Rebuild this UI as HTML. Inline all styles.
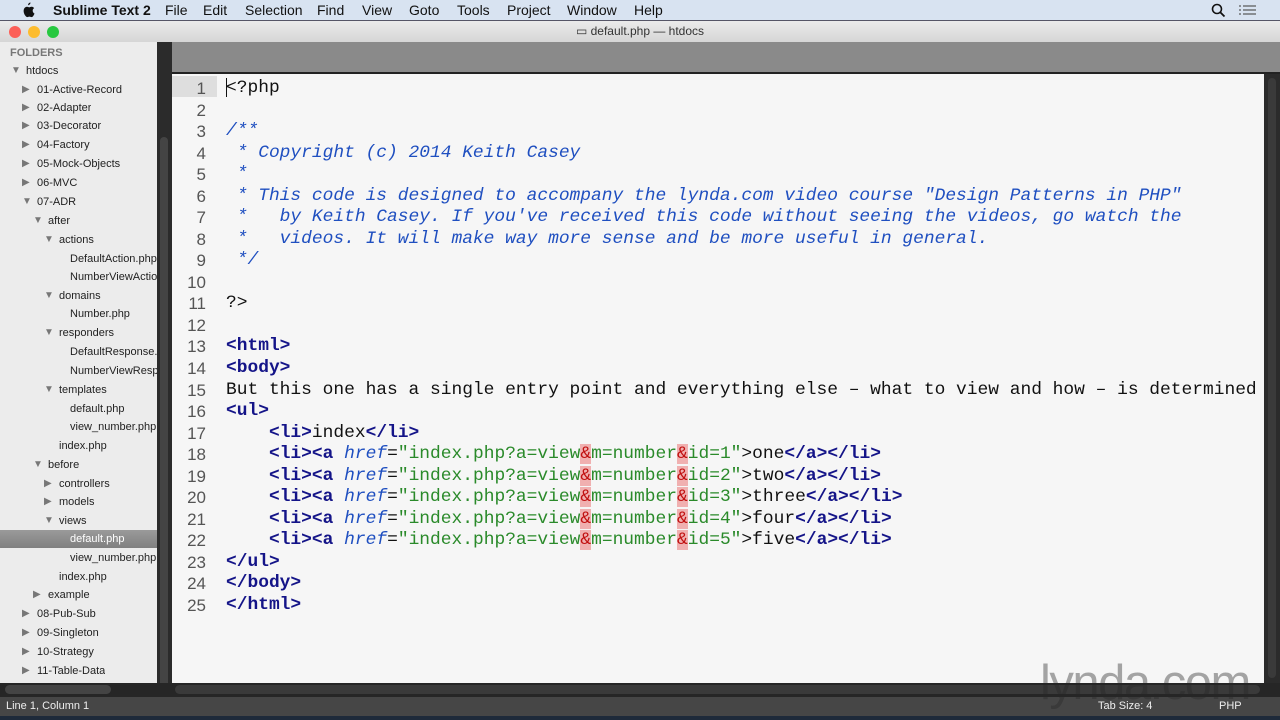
<!DOCTYPE html>
<html><head><meta charset="utf-8"><style>
*{margin:0;padding:0;box-sizing:border-box}
body{width:1280px;height:720px;overflow:hidden;background:#1e2a3a;position:relative;font-family:"Liberation Sans",sans-serif}
.abs{position:absolute}
#menu{left:0;top:0;width:1280px;height:21px;background:#d8e3f1;border-bottom:1px solid #556;font-size:14px;color:#111}
#menu span{position:absolute;top:2px}
#title{left:0;top:21px;width:1280px;height:21px;background:linear-gradient(#ebebeb,#d6d6d6);font-size:12px;color:#333;text-align:center;line-height:21px}
.dot{position:absolute;top:26px;width:12px;height:12px;border-radius:6px}
#side{left:0;top:42px;width:157px;height:641px;background:#ececec;font-size:11px;color:#222;overflow:hidden}
#side div{position:absolute;white-space:nowrap;height:18px;line-height:18px}
#sbar{left:157px;top:42px;width:15px;height:641px;background:#2b2b2b}
#tabs{left:172px;top:42px;width:1108px;height:32px;background:#8a8a8a;border-bottom:2px solid #222}
#ed{left:172px;top:74px;width:1092px;height:609px;background:#f6f6f6;overflow:hidden}
#rsb{left:1264px;top:74px;width:16px;height:609px;background:#2b2b2b}
#bsb{left:0;top:683px;width:1280px;height:14px;background:#262626}
#status{left:0;top:697px;width:1280px;height:19px;background:#464646;color:#eee;font-size:11px;line-height:19px}
.ln{position:absolute;left:0;width:34px;text-align:right;font-family:"Liberation Sans",sans-serif;font-size:17px;color:#555}
.cd{position:absolute;left:54px;font-family:"Liberation Mono",monospace;font-size:17.9px;white-space:pre;color:#111}
.t{color:#141488;font-weight:bold}.c{color:#1f4fc0;font-style:italic}.a{color:#1f4fc0;font-style:italic}.s{color:#2a8a2a}.e{color:#c01010;background:#f0b0b0}
</style></head><body>
<div id="menu" class="abs">
<svg style="position:absolute;left:21px;top:2px" width="14" height="16" viewBox="0 0 14 16"><path d="M9.5 0.5c0 1.3-1 2.6-2.4 2.7-.1-1.3 1-2.6 2.4-2.7zM11.7 8.6c0-1.6 1.3-2.4 1.4-2.5-.8-1.1-2-1.3-2.4-1.3-1-.1-2 .6-2.5.6s-1.3-.6-2.2-.6C4.900 4.800 3.800 5.500 3.200 6.500c-1.200 2.100-.3 5.200.9 6.900.6.8 1.200 1.700 2.100 1.700.8 0 1.200-.5 2.200-.5s1.300.5 2.200.5c.9 0 1.500-.8 2-1.700.6-.9.9-1.800.9-1.900 0 0-1.800-.7-1.800-2.900z" fill="#111"/></svg>
<span style="left:53px;font-weight:bold">Sublime Text 2</span>
<span style="left:165px">File</span><span style="left:203px">Edit</span><span style="left:245px">Selection</span><span style="left:317px">Find</span><span style="left:362px">View</span><span style="left:409px">Goto</span><span style="left:457px">Tools</span><span style="left:507px">Project</span><span style="left:567px">Window</span><span style="left:634px">Help</span>
<svg style="position:absolute;left:1211px;top:3px" width="15" height="15"><circle cx="6" cy="6" r="4.5" stroke="#111" stroke-width="1.6" fill="none"/><line x1="9.5" y1="9.5" x2="13.5" y2="13.5" stroke="#111" stroke-width="1.8"/></svg>
<svg style="position:absolute;left:1239px;top:4px" width="18" height="12"><g stroke="#555" stroke-width="1.2"><line x1="0" y1="2" x2="2" y2="2"/><line x1="4" y1="2" x2="17" y2="2"/><line x1="0" y1="6" x2="2" y2="6"/><line x1="4" y1="6" x2="17" y2="6"/><line x1="0" y1="10" x2="2" y2="10"/><line x1="4" y1="10" x2="17" y2="10"/></g></svg>
</div>
<div id="title" class="abs">&#9645; default.php — htdocs</div>
<div class="dot" style="left:9px;background:#fc5f57"></div><div class="dot" style="left:28px;background:#fdbc2e"></div><div class="dot" style="left:47px;background:#28c840"></div>
<div id="side" class="abs">
<div style="left:10px;top:2px;font-weight:bold;color:#777">FOLDERS</div>
<div style="left:0;top:488px;width:157px;background:linear-gradient(#9a9a9a,#808080)"></div>
</div>
<div id="tree" class="abs" style="left:0;top:1px;font-size:11px;color:#222"></div>
<div id="sbar" class="abs"><div class="abs" style="left:3px;top:95px;width:8px;height:570px;border-radius:4px;background:#444"></div></div>
<div id="tabs" class="abs"></div>
<div id="ed" class="abs"><div class="abs" style="left:0;top:2px;width:45px;height:21px;background:#dedede"></div><div class="abs" style="left:54px;top:4px;width:1px;height:19px;background:#111"></div></div>
<div id="rsb" class="abs"><div class="abs" style="left:4px;top:4px;width:8px;height:600px;border-radius:4px;background:#3a3a3a"></div></div>
<div id="bsb" class="abs"><div class="abs" style="left:5px;top:2px;width:106px;height:9px;border-radius:5px;background:#444"></div><div class="abs" style="left:175px;top:2px;width:1085px;height:9px;border-radius:5px;background:#3a3a3a"></div></div>
<div id="status" class="abs"><span style="position:absolute;left:6px">Line 1, Column 1</span><span style="position:absolute;left:1098px">Tab Size: 4</span><span style="position:absolute;left:1219px">PHP</span></div>
<div class="abs" style="left:1040px;top:660px;font-size:49px;color:rgba(40,40,40,0.4);letter-spacing:-1.5px;line-height:46px">lynda.com</div>
<script>
var T=[[70,0,1,'htdocs'],[89,1,0,'01-Active-Record'],[107,1,0,'02-Adapter'],[125,1,0,'03-Decorator'],[144,1,0,'04-Factory'],[163,1,0,'05-Mock-Objects'],[182,1,0,'06-MVC'],[201,1,1,'07-ADR'],[220,2,1,'after'],[239,3,1,'actions'],[258,4,-1,'DefaultAction.php'],[276,4,-1,'NumberViewAction.php'],[295,3,1,'domains'],[313,4,-1,'Number.php'],[332,3,1,'responders'],[351,4,-1,'DefaultResponse.php'],[370,4,-1,'NumberViewResponse.php'],[389,3,1,'templates'],[408,4,-1,'default.php'],[426,4,-1,'view_number.php'],[445,3,-1,'index.php'],[464,2,1,'before'],[483,3,0,'controllers'],[501,3,0,'models'],[520,3,1,'views'],[538,4,-1,'default.php'],[557,4,-1,'view_number.php'],[576,3,-1,'index.php'],[594,2,0,'example'],[613,1,0,'08-Pub-Sub'],[632,1,0,'09-Singleton'],[651,1,0,'10-Strategy'],[670,1,0,'11-Table-Data']];
var X=[26,37,48,59,70],h='';
T.forEach(function(r){var x=X[r[1]],y=r[0]-9;var sel=r[0]==538;
if(r[2]>=0)h+='<div style="position:absolute;left:'+(x-15)+'px;top:'+y+'px;height:18px;line-height:18px;font-size:10px;color:#777">'+(r[2]?'&#9660;':'&#9654;')+'</div>';
h+='<div style="position:absolute;left:'+x+'px;top:'+y+'px;height:18px;line-height:18px;white-space:nowrap;max-width:'+(157-x)+'px;overflow:hidden;color:'+(sel?'#fff':'#222')+'">'+r[3]+'</div>';});
document.getElementById('tree').innerHTML=h;
var L=['<span>&lt;?php</span>','','<span class="c">/**</span>','<span class="c"> * Copyright (c) 2014 Keith Casey</span>','<span class="c"> *</span>','<span class="c"> * This code is designed to accompany the lynda.com video course "Design Patterns in PHP"</span>','<span class="c"> *   by Keith Casey. If you\'ve received this code without seeing the videos, go watch the</span>','<span class="c"> *   videos. It will make way more sense and be more useful in general.</span>','<span class="c"> */</span>','','?&gt;','','<span class="t">&lt;html&gt;</span>','<span class="t">&lt;body&gt;</span>','But this one has a single entry point and everything else – what to view and how – is determined','<span class="t">&lt;ul&gt;</span>','    <span class="t">&lt;li&gt;</span>index<span class="t">&lt;/li&gt;</span>'];
var W=['one','two','three','four','five'];
W.forEach(function(w,i){L.push('    <span class="t">&lt;li&gt;&lt;a</span> <span class="a">href</span>=<span class="s">"index.php?a=view</span><span class="e">&amp;</span><span class="s">m=number</span><span class="e">&amp;</span><span class="s">id='+(i+1)+'"</span>&gt;'+w+'<span class="t">&lt;/a&gt;&lt;/li&gt;</span>');});
L.push('<span class="t">&lt;/ul&gt;</span>','<span class="t">&lt;/body&gt;</span>','<span class="t">&lt;/html&gt;</span>');
var e='';L.forEach(function(s,i){var y=15+i*21.54-11;e+='<div class="ln" style="top:'+(y+1)+'px">'+(i+1)+'</div><div class="cd" style="top:'+y+'px">'+s+'</div>';});
document.getElementById('ed').innerHTML+=e;
</script>
</body></html>
